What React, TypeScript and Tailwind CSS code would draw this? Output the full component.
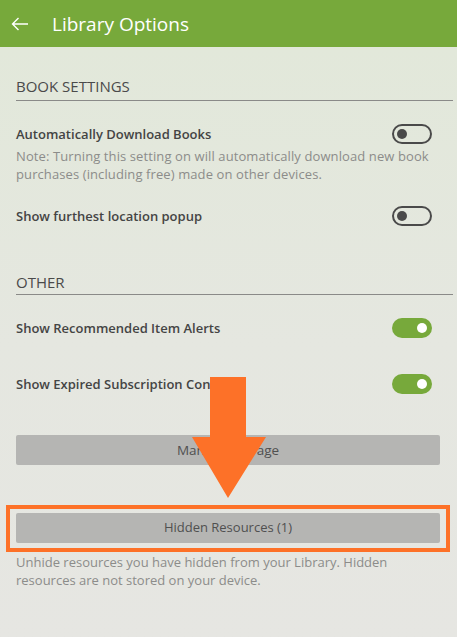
import React from "react";

const font = { fontFamily: '"Open Sans", "Noto Sans", sans-serif' };

function Toggle({ on }: { on: boolean }) {
  if (on) {
    return (
      <div className="flex h-[20px] w-[40px] shrink-0 items-center justify-end rounded-full bg-[#77a93b] pr-[5px]">
        <div className="h-[10px] w-[10px] rounded-full bg-white" />
      </div>
    );
  }
  return (
    <div className="flex h-[20px] w-[40px] shrink-0 items-center rounded-full border-2 border-[#4a4a4a] pl-[3px]">
      <div className="h-[10px] w-[10px] rounded-full bg-[#4a4a4a]" />
    </div>
  );
}

function SectionTitle({ children, className }: { children: React.ReactNode; className: string }) {
  return (
    <div className={`mr-[4px] border-b border-[#8a8a88] text-[15px] leading-[20px] text-[#4a4a4a] ${className}`}>
      {children}
    </div>
  );
}

function Row({ label, on, className }: { label: string; on: boolean; className: string }) {
  return (
    <div className={`flex h-[20px] items-center justify-between pr-[25px] ${className}`}>
      <span className="text-[13px] font-semibold leading-[20px] text-[#444444]">{label}</span>
      <Toggle on={on} />
    </div>
  );
}

export default function App() {
  return (
    <div className="relative h-[637px] w-[457px] overflow-hidden bg-[#e6e6e2]" style={font}>
      {/* Header */}
      <div className="flex h-[47px] items-center bg-[#77a93b] text-white">
        <svg width="18" height="14" viewBox="0 0 18 14" className="ml-[11px]">
          <path d="M17 7H1.5M7.5 1L1.5 7l6 6" stroke="white" strokeWidth="1.4" fill="none" />
        </svg>
        <span className="ml-[23px] text-[19px] leading-[24px]">Library Options</span>
      </div>

      <div className="bg-gradient-to-b from-[#e2e8da] via-[#e5e7e0] to-[#e6e6e2] pl-4" style={{ minHeight: 590 }}>
        <SectionTitle className="pt-[29px] pb-[4px]">BOOK SETTINGS</SectionTitle>

        <Row label="Automatically Download Books" on={false} className="mt-[23px]" />
        <p className="mt-[3px] pr-[6px] text-[13px] leading-[18px] tracking-[0.1px] text-[#8c8c8a]">
          Note: Turning this setting on will automatically download new book purchases (including free) made on other devices.
        </p>

        <Row label="Show furthest location popup" on={false} className="mt-[23px]" />

        <SectionTitle className="mt-[46px] pb-[2px]">OTHER</SectionTitle>

        <Row label="Show Recommended Item Alerts" on={true} className="mt-[23px]" />
        <Row label="Show Expired Subscription Content" on={true} className="mt-[36px]" />

        <button className="mt-[41px] flex h-[30px] w-[424px] items-center justify-center rounded-[2px] bg-[#b5b5b3] text-[13.5px] text-[#505050]">
          Manage Storage
        </button>

        <button className="mt-[48px] flex h-[30px] w-[424px] items-center justify-center rounded-[2px] bg-[#b5b5b3] text-[13px] text-[#505050]">
          Hidden Resources (1)
        </button>

        <p className="mt-[10px] pr-[20px] text-[13px] leading-[18px] text-[#8c8c8a]">
          Unhide resources you have hidden from your Library. Hidden resources are not stored on your device.
        </p>
      </div>

      {/* Annotation overlay */}
      <div className="absolute left-[6px] top-[505px] h-[47px] w-[444px] border-4 border-[#fd7128]" />
      <svg className="absolute left-0 top-0" width="457" height="637" viewBox="0 0 457 637">
        <polygon points="210,377 246,377 246,437 266,437 228,498 192,437 210,437" fill="#fd7128" />
      </svg>
    </div>
  );
}
